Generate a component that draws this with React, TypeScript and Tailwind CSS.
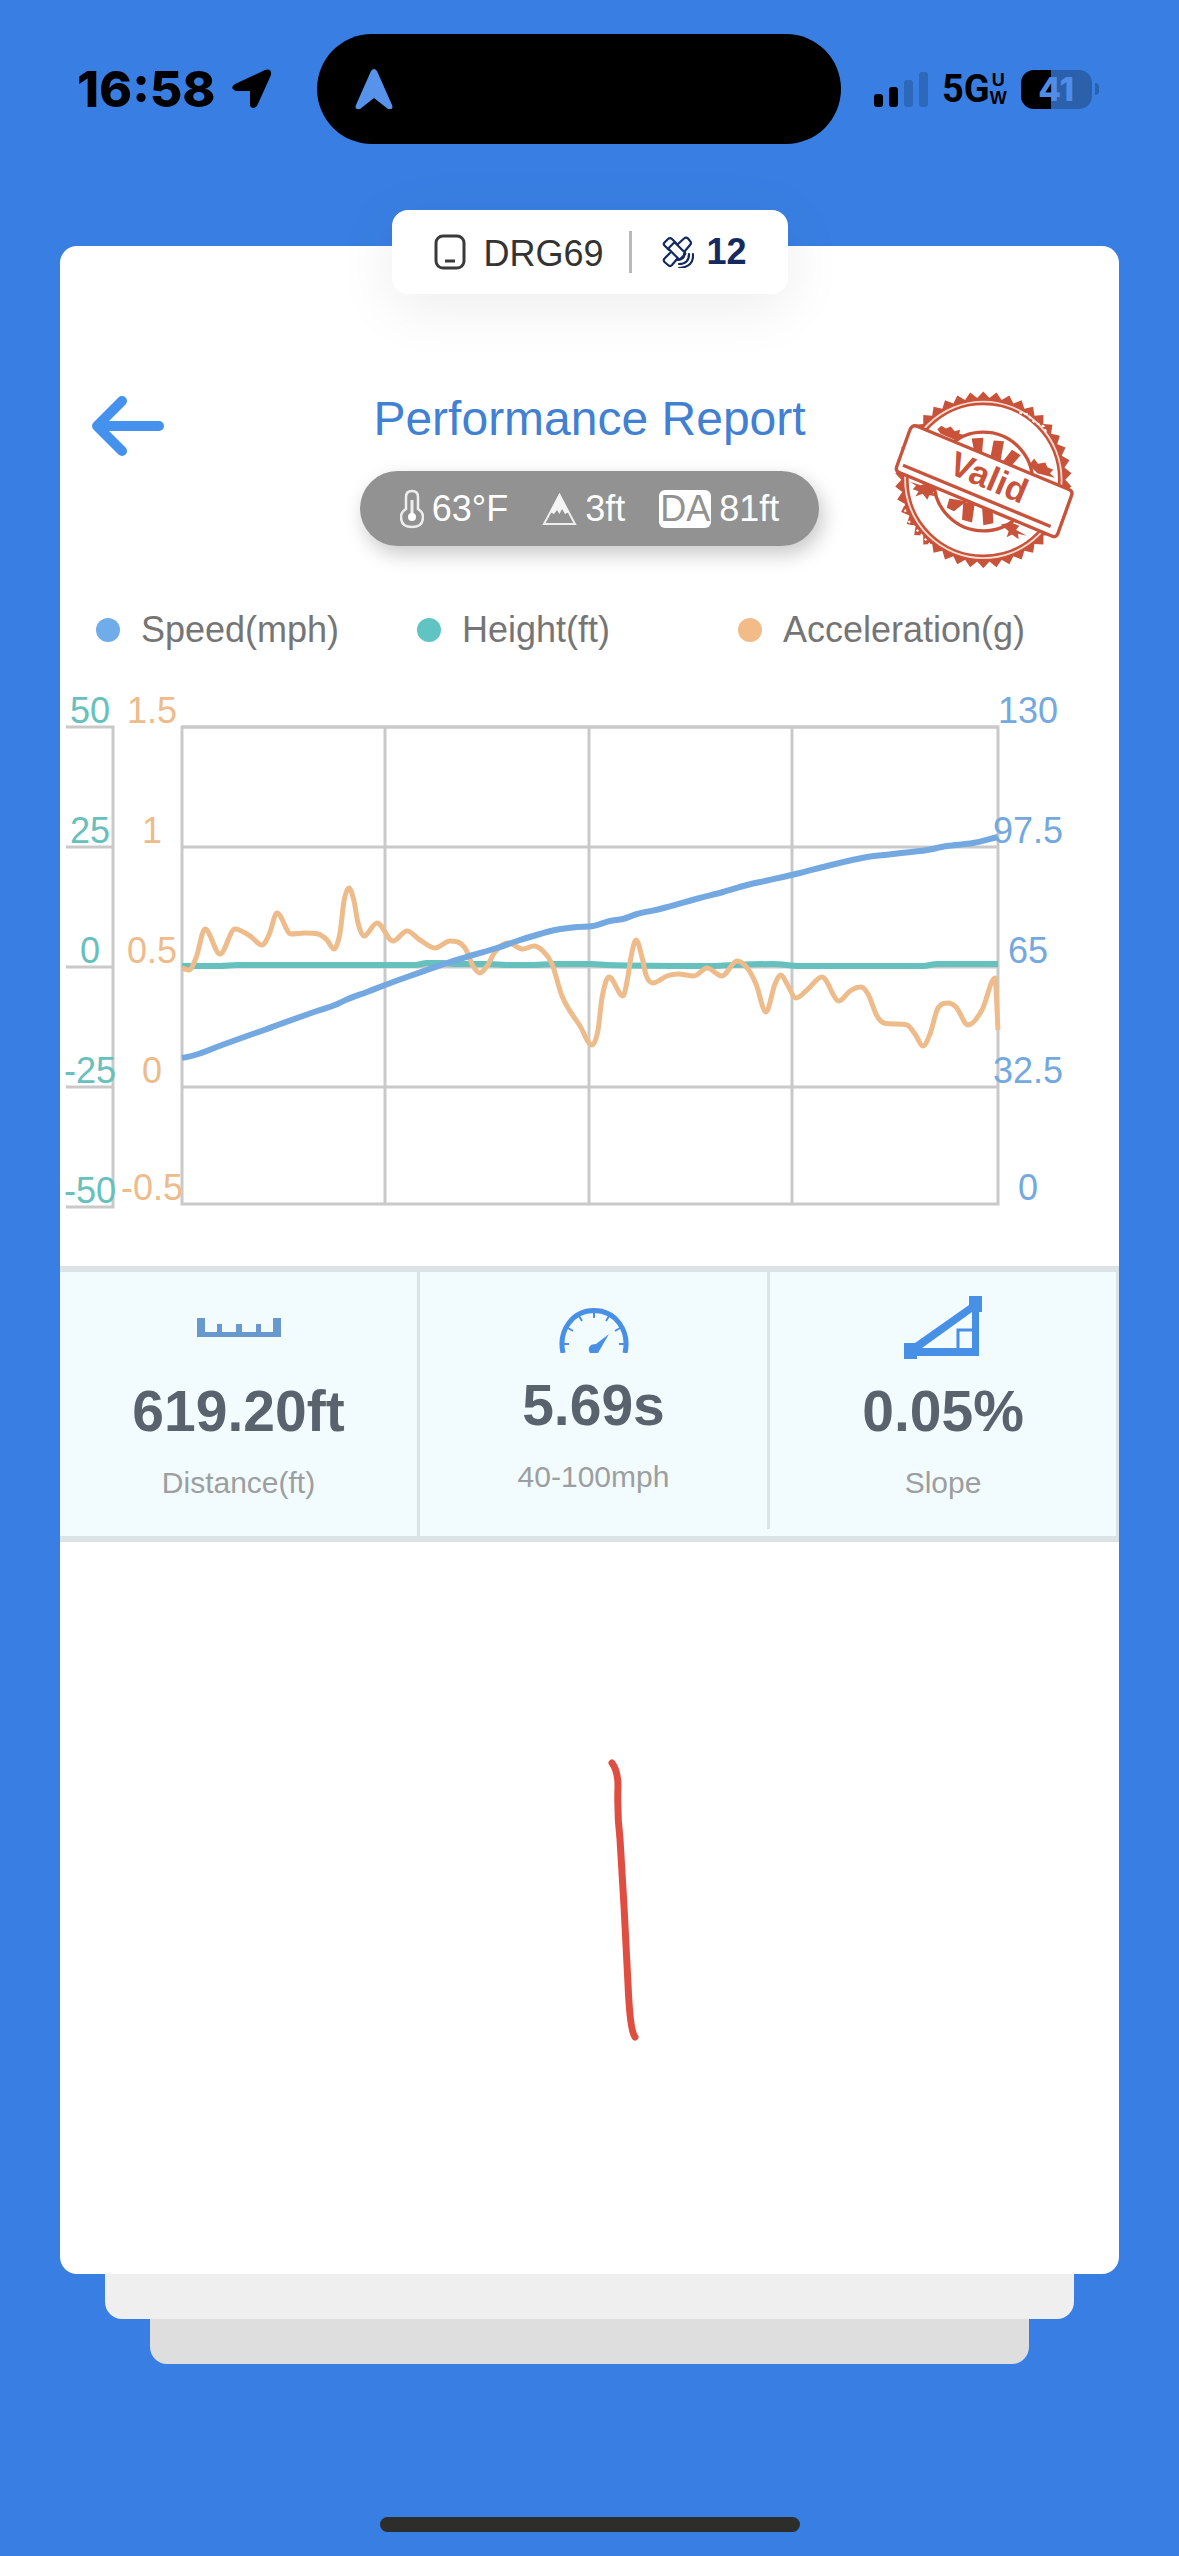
import type { ReactNode } from "react";

type Point = [number, number];

const COLORS = {
  speed: "#73a9e0",
  height: "#66c0bd",
  acceleration: "#eebb8b",
  grid: "#c9c9c9",
  stamp: "#c8523a",
};

const legend = [
  { label: "Speed(mph)", dot: "bg-[#70abea]" },
  { label: "Height(ft)", dot: "bg-[#5fc4c2]" },
  { label: "Acceleration(g)", dot: "bg-[#f3bb88]" },
];

const rows = [727, 847, 967, 1087];
const columns = [385, 589, 792];

const speed: Point[] = [
  [182, 1058], [195, 1055], [222, 1045], [247, 1036], [267, 1029], [275, 1026],
  [317, 1011], [335, 1005], [348, 999], [367, 992], [385, 985], [407, 977],
  [427, 970], [450, 962], [473, 955], [497, 948], [517, 941], [540, 934],
  [555, 930], [577, 927], [593, 926], [610, 921], [623, 919], [637, 914],
  [660, 909], [700, 898], [723, 892], [747, 885], [765, 881], [783, 877],
  [800, 873], [827, 866], [867, 857], [893, 854], [927, 850], [947, 846],
  [973, 843], [998, 837],
];

const height: Point[] = [
  [182, 966], [220, 966], [237, 965], [415, 965], [427, 963], [443, 963],
  [457, 964], [490, 964], [507, 965], [533, 965], [553, 964], [592, 964],
  [607, 965], [710, 966], [733, 965], [773, 964], [800, 966], [923, 966],
  [937, 964], [998, 964],
];

const acceleration: Point[] = [
  [182, 968], [189, 970], [196, 958], [205, 929], [220, 954], [235, 929],
  [250, 936], [262, 945], [269, 935], [277, 913], [291, 934], [305, 933],
  [318, 934], [327, 940], [334, 949], [340, 933], [344, 901], [349, 888],
  [354, 901], [358, 923], [364, 936], [377, 923], [393, 941], [407, 931],
  [420, 940], [435, 948], [450, 941], [465, 948], [473, 966], [480, 973],
  [487, 966], [495, 952], [508, 943], [523, 949], [534, 946], [543, 951],
  [552, 964], [562, 996], [580, 1026], [592, 1045], [598, 1030], [602, 998],
  [609, 977], [623, 996], [628, 976], [631, 957], [636, 940], [642, 957],
  [646, 975], [653, 983], [667, 976], [678, 974], [694, 976], [707, 968],
  [722, 976], [737, 961], [748, 969], [756, 984], [766, 1012], [775, 984],
  [781, 975], [787, 984], [796, 998], [807, 990], [822, 977], [839, 1001],
  [850, 991], [861, 987], [868, 994], [877, 1016], [884, 1023], [907, 1025],
  [915, 1034], [923, 1046], [930, 1034], [938, 1008], [948, 1003], [956, 1007],
  [968, 1025], [982, 1010], [995, 978], [998, 1030],
];

// Monotone cubic curve, so the line never overshoots its own samples
const smoothPath = (points: Point[]) => {
  const slopes = points.slice(1).map(([x, y], i) => (y - points[i][1]) / (x - points[i][0]));
  const tangents = points.map((_, i) => {
    if (i === 0) return slopes[0];
    if (i === points.length - 1) return slopes[i - 1];
    const a = slopes[i - 1];
    const b = slopes[i];
    if (a * b <= 0) return 0;
    return Math.sign(a) * Math.min(Math.abs(a + b) / 2, 3 * Math.abs(a), 3 * Math.abs(b));
  });

  return points.reduce((d, [x, y], i) => {
    if (i === 0) return `M${x} ${y}`;
    const [px, py] = points[i - 1];
    const h = (x - px) / 3;
    return `${d}C${px + h} ${py + h * tangents[i - 1]} ${x - h} ${y - h * tangents[i]} ${x} ${y}`;
  }, "");
};

const TEETH = 42;
const teeth = Array.from({ length: TEETH * 2 }, (_, i) => {
  const angle = (Math.PI * i) / TEETH - Math.PI / 2;
  const radius = i % 2 ? 246 : 265;
  return `${(338 + radius * Math.cos(angle)).toFixed(1)},${(328 + radius * Math.sin(angle)).toFixed(1)}`;
}).join(" ");

const StatusBar = () => (
  <header className="grid grid-cols-[317px_1fr_338px] items-center pt-[34px] text-black">
    <div className="flex items-center gap-4 pl-[77px]">
      <span className="font-['Inter',sans-serif] text-[50px] leading-[56px] font-extrabold">16:58</span>
      <svg className="h-10 w-10 shrink-0" viewBox="0 0 40 40">
        <path
          d="M3 15 33 1Q40-1 39 6L25 37Q21 41 18 37V22H4Q-3 19 3 15Z"
          fill="#000"
        />
      </svg>
    </div>
    <div className="flex h-[110px] items-center rounded-full bg-black pl-[38px]">
      <svg className="h-[42px] w-[38px]" viewBox="0 0 38 42">
        <path
          d="M16 3Q19-1 22 3L37 37Q39 42 33 41L19 30 5 41Q-1 42 1 37Z"
          fill="#5793ea"
        />
      </svg>
    </div>
    <div className="flex items-center pl-[33px]">
      <svg className="h-9 w-[54px]" viewBox="0 0 54 36">
        <rect x="0" y="23" width="9" height="13" rx="3" />
        <rect x="15" y="16" width="9" height="20" rx="3" />
        <rect x="30" y="9" width="9" height="27" rx="3" fillOpacity=".18" />
        <rect x="45" y="1" width="9" height="35" rx="3" fillOpacity=".18" />
      </svg>
      <span className="ml-[14px] font-['Roboto',sans-serif] text-[38px] leading-10 font-bold">5G</span>
      <span className="flex flex-col items-center font-['Liberation_Sans',sans-serif] text-[18px] leading-[18px] font-bold">
        <span>U</span>
        <span>W</span>
      </span>
      <div className="ml-[14px] flex items-center gap-[3px]">
        <div className="flex h-[39px] w-[71px] items-center justify-center rounded-[13px] bg-[linear-gradient(90deg,#000_42%,#2b61ac_42%)] font-['Inter',sans-serif] text-[33px] leading-none font-extrabold text-[#4f8de8]">
          41
        </div>
        <div className="h-3 w-1 rounded-r-full bg-[#2b61ac]" />
      </div>
    </div>
  </header>
);

const DeviceBadge = () => (
  <div className="relative z-10 mx-auto mt-[66px] -mb-12 flex h-[84px] w-[396px] items-center rounded-2xl bg-white pl-[42px] text-[36px] leading-10 shadow-[0_12px_60px_rgba(0,0,0,0.08)]">
    <svg className="h-9 w-8" viewBox="0 0 32 36" fill="none" stroke="#3a3a3a" strokeWidth="3">
      <rect x="2" y="2" width="28" height="32" rx="7" />
      <path d="M11 27h10" />
    </svg>
    <span className="ml-[18px] pt-1 text-[#333]">DRG69</span>
    <span className="ml-[25px] h-[42px] w-[3px] bg-[#b9b9b9]" />
    <svg
      className="ml-[30px] h-8 w-8"
      viewBox="0 0 32 32"
      fill="none"
      stroke="#14295f"
      strokeWidth="2.2"
      strokeLinecap="round"
      strokeLinejoin="round"
    >
      <rect x="-4.5" y="-8" width="9" height="16" rx="1.5" transform="translate(15 15) rotate(-45)" />
      <path d="M7 14 2.500 9.500Q1 8 2.500 6.500L6 3Q8 1 10 3L14 7" />
      <path d="M16 8 22 2.500Q24 .500 26 2.500L28 5Q30 7 28 9L23 15" />
      <path d="M8 17 2.500 22.500Q1 24 2.500 26L6 29Q8 31 10 29L15 23" />
      <path d="M22 18Q23 23 16 24M27 18Q27 28 17 28M31 18Q32 31 17 32" />
    </svg>
    <span className="ml-[13px] font-bold text-[#14295f]">12</span>
  </div>
);

const ValidStamp = () => (
  <svg className="h-[177px] w-[180px]" viewBox="70 62 540 530" role="img" aria-label="Valid">
    <polygon points={teeth} fill={COLORS.stamp} />
    <circle cx="338" cy="328" r="234" fill="#fff" stroke="#fbdccf" strokeWidth="7" />
    <circle cx="338" cy="328" r="228" fill="none" stroke={COLORS.stamp} strokeWidth="8" />
    <path d="M446 126 470 132 492 156 520 168 528 190" fill="none" stroke="#fff" strokeWidth="6" strokeDasharray="9 7" />
    <path d="M98 400 112 450 150 490 184 530" fill="none" stroke="#fff" strokeWidth="6" strokeDasharray="7 11" />
    <circle cx="338" cy="333" r="148" fill="#fff" stroke={COLORS.stamp} strokeWidth="10" />
    <g fill={COLORS.stamp}>
      <path d="M303 204 338 202 334 250 310 240Z" />
      <path d="M369 210 400 212 390 268 360 256Z" />
      <path d="M424 238 450 254 418 290 394 276Z" />
      <path d="M236 384 288 392 250 422 228 412Z" />
      <path d="M278 394 312 400 304 456 274 448Z" />
      <path d="M334 408 366 418 368 458 338 464Z" />
      <path d="M200 176 212 166 226 174 240 168 252 182 268 178 266 190 284 194 262 212 210 190Z" />
      <path d="M476 284 490 264 502 280 524 276 530 290 548 298 538 308 552 322 500 308Z" />
      <path d="M118 334 150 344 164 340 196 356 186 366 202 378 176 374 170 388 156 370 134 378 144 362 126 356 136 346Z" />
      <path d="M390 462 420 456 446 466 436 478 468 496 442 490 444 506 424 492 408 500 414 482Z" />
    </g>
    <path
      d="M141 168 595 357Q607 362 603 374L562 488Q557 502 545 497L86 306Q74 301 78 289L117 180Q123 160 141 168Z"
      fill="#fff"
      stroke={COLORS.stamp}
      strokeWidth="10"
    />
    <path d="M97 284 540 468" stroke={COLORS.stamp} strokeWidth="10" />
    <text
      transform="translate(229 306) rotate(23)"
      fill={COLORS.stamp}
      className="text-[104px] font-bold"
    >
      Valid
    </text>
  </svg>
);

const Conditions = () => (
  <div className="mt-[23px] flex h-[75px] items-center gap-[34px] rounded-full bg-[#929292] px-10 text-[36px] leading-10 text-white shadow-[4px_8px_20px_rgba(0,0,0,0.22)]">
    <div className="flex items-center gap-2">
      <svg className="h-10 w-6" viewBox="0 0 24 40" fill="none" stroke="#eee" strokeWidth="2.5">
        <path d="M6 20V8Q6 2 12 2T18 8V20Q23 23 23 28 23 38 12 38 1 38 1 28 1 23 6 20Z" />
        <path d="M12 11v18" strokeWidth="3" />
        <circle cx="12" cy="28" r="4" fill="#fff" stroke="none" />
      </svg>
      <span>63°F</span>
    </div>
    <div className="flex items-center gap-2">
      <svg className="h-[34px] w-[35px]" viewBox="0 0 35 34">
        <path d="M17.500 3 33 32H2Z" fill="none" stroke="#eee" strokeWidth="2" />
        <path d="M17.500 1 27 20 23 22 20 17 17.500 22 15 18 12 22 8 20Z" fill="#f4f4f4" />
      </svg>
      <span>3ft</span>
    </div>
    <div className="flex items-center gap-2">
      <span className="rounded-md bg-white px-px leading-[38px] text-[#929292]">DA</span>
      <span>81ft</span>
    </div>
  </div>
);

type AxisLabelsProps = {
  values: string[];
  x: number;
  color: string;
  lastY: number;
};

const AxisLabels = ({ values, x, color, lastY }: AxisLabelsProps) => (
  <g fill={color} textAnchor="middle" className="text-[36px]">
    {values.map((value, i) => (
      <text key={value} x={x} y={i === values.length - 1 ? lastY : 723 + i * 120}>
        {value}
      </text>
    ))}
  </g>
);

const PerformanceChart = () => (
  <svg className="mt-10 block h-auto w-full" viewBox="60 690 1059 530">
    <g stroke={COLORS.grid} strokeWidth="3" fill="none">
      <path d="M66 727H113V1207H66M66 847H113M66 967H113M66 1087H113" />
      <rect x="182" y="727" width="816" height="477" />
      {rows.map((y) => (
        <path key={y} d={`M182 ${y}H998`} />
      ))}
      {columns.map((x) => (
        <path key={x} d={`M${x} 727V1204`} />
      ))}
    </g>
    <AxisLabels values={["50", "25", "0", "-25", "-50"]} x={90} color={COLORS.height} lastY={1203} />
    <AxisLabels values={["1.5", "1", "0.5", "0", "-0.5"]} x={152} color={COLORS.acceleration} lastY={1200} />
    <AxisLabels values={["130", "97.5", "65", "32.5", "0"]} x={1028} color={COLORS.speed} lastY={1200} />
    <g fill="none" strokeLinejoin="round">
      <path d={smoothPath(height)} stroke={COLORS.height} strokeWidth="6" />
      <path d={smoothPath(acceleration)} stroke={COLORS.acceleration} strokeWidth="5" />
      <path d={smoothPath(speed)} stroke={COLORS.speed} strokeWidth="6" />
    </g>
  </svg>
);

const RulerIcon = () => (
  <svg className="h-[63px] w-[84px]" viewBox="0 0 84 63">
    <path
      d="M0 22H8V36H20V28H25V36H39V28H45V36H59V28H64V36H76V22H84V41H0Z"
      fill="#6799cf"
    />
  </svg>
);

const GaugeIcon = () => (
  <svg className="h-[45px] w-[70px]" viewBox="0 0 70 45" fill="none" stroke="#4790e6">
    <path d="M4 45C-1 22 14 2.500 35 2.500S71 22 66 45" strokeWidth="5" />
    <path d="M35 4v6M20 8l3 5M50 8l-3 5M9 20l5 3M61 20l-5 3M4 36h6M66 36h-6" strokeWidth="2" />
    <path d="M50 26 39 45H31Q28 40 32 37 35 36 37 36Z" fill="#4790e6" stroke="none" />
  </svg>
);

const SlopeIcon = () => (
  <svg className="h-[63px] w-[78px]" viewBox="0 0 78 63">
    <path
      d="M65 0H78V16H75V60H13V63H0V47H11L65 9ZM68 16 18 52H68Z"
      fill="#4790e6"
      fillRule="evenodd"
    />
    <path d="M54 53V34H70" fill="none" stroke="#4790e6" strokeWidth="3" />
  </svg>
);

type StatProps = {
  icon: ReactNode;
  value: string;
  label: string;
  className: string;
};

const Stat = ({ icon, value, label, className }: StatProps) => (
  <div className={`flex flex-col items-center gap-5 border-r-3 border-[#dce3e5] ${className}`}>
    {icon}
    <p className="text-[57px] leading-[64px] font-bold text-[#59636e]">{value}</p>
    <p className="text-[30px] leading-10 font-light text-[#9c9fa0]">{label}</p>
  </div>
);

const App = () => {
  return (
    <div className="flex min-h-screen flex-col bg-[#397fe3] font-['Liberation_Sans',Arial,sans-serif]">
      <StatusBar />
      <DeviceBadge />

      <main className="mx-[60px] flex flex-1 flex-col rounded-[17px] bg-white pt-36">
        <div className="grid grid-cols-[1fr_auto_1fr] items-start">
          <button type="button" aria-label="Back" className="justify-self-start pt-1.5 pl-8">
            <svg
              className="h-[60px] w-[72px]"
              viewBox="0 0 72 60"
              fill="none"
              stroke="#4592ee"
              strokeWidth="10"
              strokeLinecap="round"
              strokeLinejoin="round"
            >
              <path d="M30 5 5 30 30 55M6 30H67" />
            </svg>
          </button>
          <div className="flex flex-col items-center">
            <h1 className="text-[48px] leading-[58px] text-[#4180d2]">Performance Report</h1>
            <Conditions />
          </div>
          <div className="justify-self-end pt-px pr-[45px]">
            <ValidStamp />
          </div>
        </div>

        <ul className="mt-[42px] grid grid-cols-3 pr-[60px] pl-9">
          {legend.map((item) => (
            <li
              key={item.label}
              className="flex items-center gap-[21px] text-[36px] leading-10 text-[#757575]"
            >
              <span className={`h-6 w-6 shrink-0 rounded-full ${item.dot}`} />
              {item.label}
            </li>
          ))}
        </ul>

        <PerformanceChart />

        <section className="mt-[46px] grid grid-cols-[360fr_350fr_349fr] border-y-6 border-[#dce3e5] bg-[#f2fbfd]">
          <Stat icon={<RulerIcon />} value="619.20ft" label="Distance(ft)" className="pt-6 pb-[33px]" />
          <Stat icon={<GaugeIcon />} value="5.69s" label="40-100mph" className="mb-[7px] pt-9" />
          <Stat icon={<SlopeIcon />} value="0.05%" label="Slope" className="pt-6 pb-[33px]" />
        </section>

        {/* GPS track of the run */}
        <div className="flex flex-1 items-center justify-center">
          <svg className="block h-auto w-full" viewBox="60 1544 1059 730">
            <path
              d="M612 1764Q618 1772 618 1787 617 1815 620 1840L624 1907 628 1985Q630 2032 635 2038"
              fill="none"
              stroke="#e04e41"
              strokeWidth="7"
              strokeLinecap="round"
            />
          </svg>
        </div>
      </main>
      <div className="mx-[105px] h-[45px] rounded-b-[17px] bg-[#efefef]" />
      <div className="mx-[150px] h-[45px] rounded-b-[17px] bg-[#dedede]" />

      <div className="mx-auto mt-[153px] mb-6 h-[15px] w-[420px] rounded-full bg-[#2d2d2b]" />
    </div>
  );
};

export default App;
